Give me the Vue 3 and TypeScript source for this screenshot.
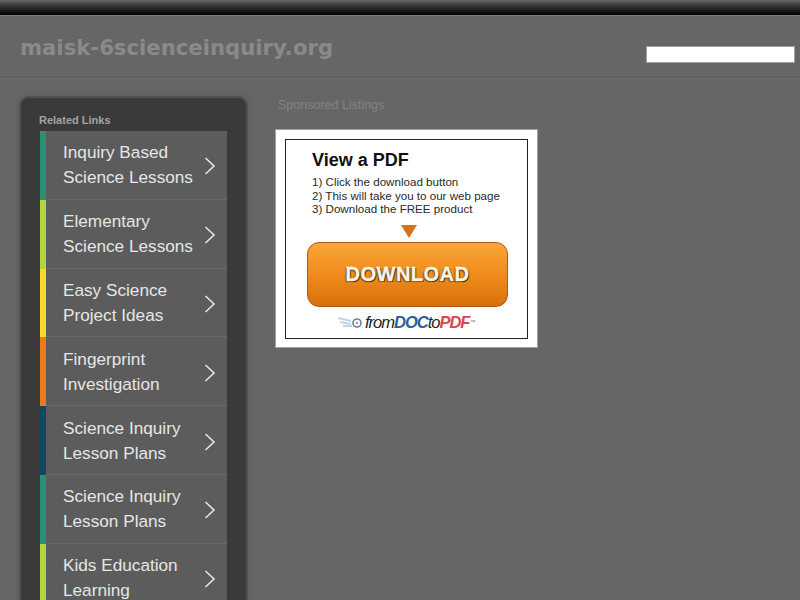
<script setup lang="ts">
interface LinkItem { l1: string; l2: string; color: string }
const links: LinkItem[] = [
  { l1: 'Inquiry Based', l2: 'Science Lessons', color: '#2a9274' },
  { l1: 'Elementary', l2: 'Science Lessons', color: '#b4d444' },
  { l1: 'Easy Science', l2: 'Project Ideas', color: '#f5dc28' },
  { l1: 'Fingerprint', l2: 'Investigation', color: '#ec7a1e' },
  { l1: 'Science Inquiry', l2: 'Lesson Plans', color: '#0c4a5e' },
  { l1: 'Science Inquiry', l2: 'Lesson Plans', color: '#2a9274' },
  { l1: 'Kids Education', l2: 'Learning', color: '#b4d444' },
]
</script>

<template>
  <div class="page">
    <div class="topbar"></div>
    <header class="header">
      <h1 class="domain">maisk-6scienceinquiry.org</h1>
      <div class="search"></div>
    </header>
    <main class="main">
      <aside class="panel">
        <div class="panel-title">Related Links</div>
        <ul class="list">
          <li v-for="(item, i) in links" :key="i" class="item" :style="{ borderLeftColor: item.color }">
            <span class="label">{{ item.l1 }}<br />{{ item.l2 }}</span>
            <svg class="chev" width="12" height="20" viewBox="0 0 12 20" fill="none">
              <path d="M1.5 2 L10 10 L1.5 18" stroke="#e6e6e6" stroke-width="1.6" />
            </svg>
          </li>
        </ul>
      </aside>
      <section class="content">
        <div class="sponsored">Sponsored Listings</div>
        <div class="ad">
          <div class="ad-inner">
            <div class="ad-title">View a PDF</div>
            <div class="ad-steps">
              <div>1) Click the download button</div>
              <div>2) This will take you to our web page</div>
              <div>3) Download the FREE product</div>
            </div>
            <div class="arrow"></div>
            <div class="btn">DOWNLOAD</div>
            <div class="brand">
              <svg class="swoosh" width="28" height="14" viewBox="0 0 28 14" fill="none">
                <path d="M1 3 L14 6 M3 7 L14 9 M6 11 L15 11" stroke="#c4d2e6" stroke-width="2" />
                <circle cx="20" cy="8" r="4" stroke="#6d8098" stroke-width="1.6" />
                <circle cx="20" cy="8" r="1.4" fill="#d9928c" />
              </svg>
              <span class="from">from</span><span class="doc">DOC</span><span class="from">to</span><span class="pdf">PDF</span><span class="tm">™</span>
            </div>
          </div>
        </div>
      </section>
    </main>
  </div>
</template>

<style>
html, body { margin: 0; background: #666; overflow: hidden; }
</style>

<style scoped>
.page {
  width: 800px;
  height: 600px;
  overflow: hidden;
  background: #666;
  font-family: "Liberation Sans", Arial, sans-serif;
}
.topbar {
  height: 15px;
  background: linear-gradient(#686868, #3a3a3a 35%, #000 100%);
  border-bottom: 1px solid #7c7c7c;
}
.header {
  height: 62px;
  box-sizing: border-box;
  display: flex;
  justify-content: space-between;
  border-bottom: 1px solid #5c5c5c;
  box-shadow: 0 1px 0 #6e6e6e;
  padding-left: 20px;
}
.domain {
  margin: 18px 0 0;
  font-family: "DejaVu Sans", sans-serif;
  font-size: 21.2px;
  line-height: 27px;
  font-weight: bold;
  color: #8a8a8a;
}
.search {
  width: 147px;
  height: 15px;
  margin: 30px 5px 0 0;
  background: #fff;
  border: 1px solid #a0a0a0;
  box-sizing: content-box;
}
.main {
  display: flex;
  align-items: flex-start;
  padding: 20px 0 0 21px;
}
.panel {
  width: 225px;
  box-sizing: border-box;
  height: 540px;
  padding: 0 19px;
  background: #3a3a3a;
  border-radius: 8px 8px 0 0;
  box-shadow: 0 0 0 2px #505050, 0 0 5px 3px #5c5c5c;
}
.panel-title {
  font-size: 11px;
  font-weight: bold;
  line-height: 14px;
  color: #a4a4a4;
  padding: 15px 0 4px;
  margin-left: -1px;
}
.list {
  list-style: none;
  margin: 0;
  padding: 0;
}
.item {
  height: 68.8px;
  box-sizing: border-box;
  display: flex;
  align-items: center;
  justify-content: space-between;
  border-left: 6px solid;
  box-shadow: inset 0 -1px 0 #686868;
  background: #5c5c5c;
  padding: 0 11px 0 17px;
}
.label {
  font-size: 17.2px;
  line-height: 25px;
  color: #e6e6e6;
}
.chev { flex: none; margin-top: 2px; }
.content {
  margin-left: 29px;
}
.sponsored {
  font-size: 12.5px;
  line-height: 14px;
  color: #838383;
  margin: 0 0 0 3px;
}
.ad {
  margin-top: 17px;
  width: 263px;
  height: 219px;
  box-sizing: border-box;
  padding: 9px;
  background: #fff;
  border: 1px solid #a0a0a0;
}
.ad-inner {
  height: 200px;
  box-sizing: border-box;
  border: 1.5px solid #222;
  display: flex;
  flex-direction: column;
  padding: 10px 0 0 21px;
}
.ad-title {
  margin-left: 5px;
  font-size: 18px;
  line-height: 20px;
  font-weight: bold;
  color: #111;
}
.ad-steps {
  margin: 5px 0 0 5px;
  font-size: 11.6px;
  line-height: 13.5px;
  color: #2a2a2a;
}
.arrow {
  width: 0;
  height: 0;
  margin: 9px 0 0 94px;
  border-left: 8px solid transparent;
  border-right: 8px solid transparent;
  border-top: 13px solid #d9701a;
}
.btn {
  width: 201px;
  height: 65px;
  margin: 4px 0 0 0;
  box-sizing: border-box;
  border: 1px solid #a85a10;
  border-radius: 12px;
  background: linear-gradient(#f9a63a, #f08c1a 50%, #d96f0c);
  display: flex;
  align-items: center;
  justify-content: center;
  font-size: 20px;
  font-weight: bold;
  letter-spacing: .5px;
  color: #fdf3e4;
  -webkit-text-stroke: .4px #fdf3e4;
  text-shadow: 1px 1px 0 #4a2604, -1px 1px 1px #6a3a0a;
}
.brand {
  display: flex;
  align-items: center;
  margin: 5px 0 0 30px;
  font-size: 16.5px;
  line-height: 20px;
  font-style: italic;
  letter-spacing: -1px;
}
.swoosh { flex: none; }
.from { color: #222; }
.doc { color: #2f5f9a; font-weight: bold; }
.pdf { color: #d8484a; font-weight: bold; }
.tm { font-size: 6px; color: #777; align-self: flex-start; letter-spacing: 0; }
</style>
